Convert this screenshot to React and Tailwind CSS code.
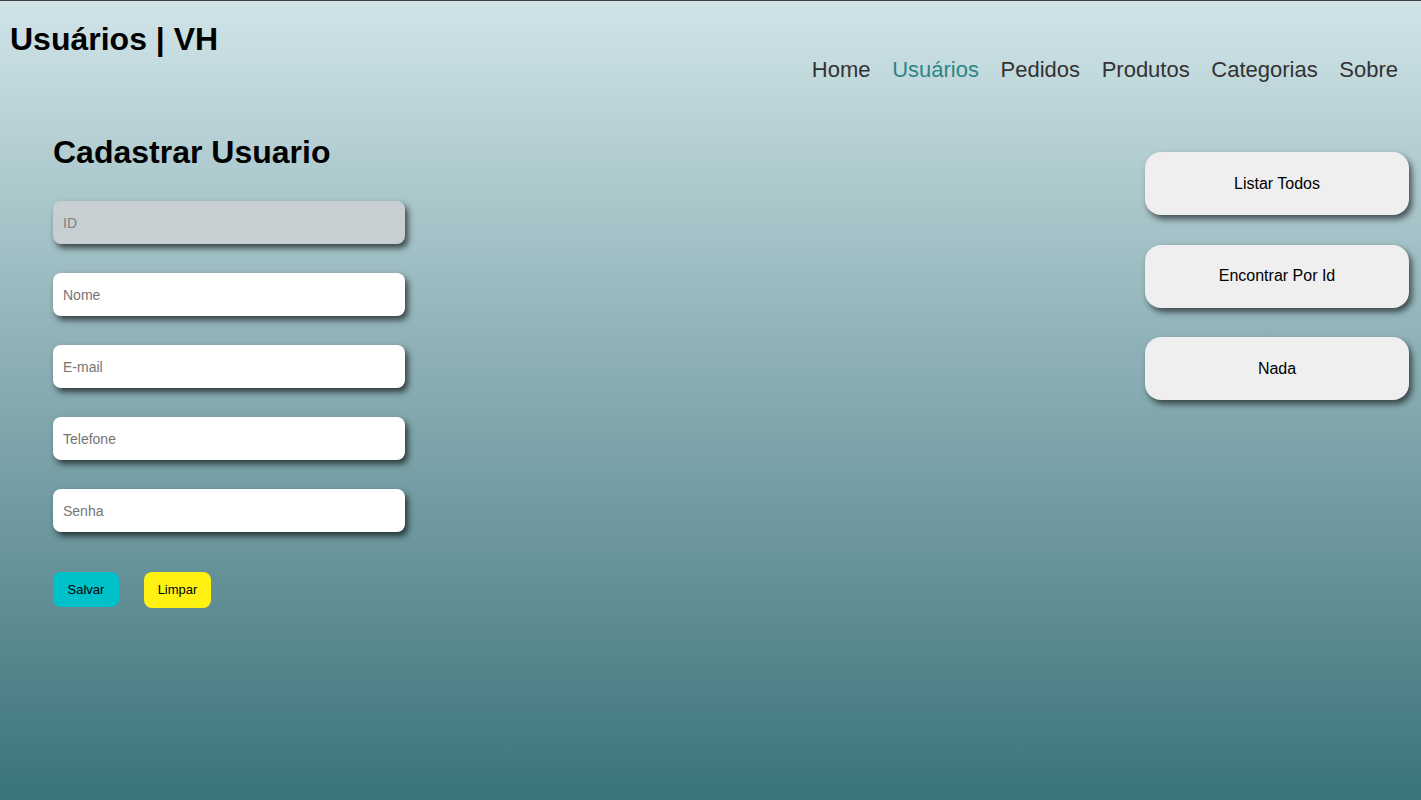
import React from "react";

export default function App() {
  const fields = ["Nome", "E-mail", "Telefone", "Senha"];
  const nav = ["Home", "Usuários", "Pedidos", "Produtos", "Categorias", "Sobre"];
  return (
    <div
      className="h-[800px] w-full overflow-hidden border-t border-[#3b3f48] bg-gradient-to-b from-[#d0e4e8] to-[#3a737a] text-black"
      style={{ fontFamily: '"Liberation Sans", Arial, sans-serif' }}
    >
      <header className="flex items-start justify-between">
        <h1 className="ml-[10px] mt-[20px] text-[32px] font-bold leading-[37px]">Usuários | VH</h1>
        <nav className="mr-[23px] mt-[56px] flex gap-[21.6px] text-[22px] leading-[25px] text-[#333333]">
          {nav.map((n) => (
            <a key={n} className={n === "Usuários" ? "text-[#2f8585]" : ""}>
              {n}
            </a>
          ))}
        </nav>
      </header>
      <main className="flex items-start justify-between">
        <section className="ml-[53px] mt-[52px]">
          <h2 className="text-[32px] font-bold leading-[37px]">Cadastrar Usuario</h2>
          <div className="mt-[30px] flex flex-col gap-[29px]">
            <input
              disabled
              placeholder="ID"
              className="h-[43px] w-[352px] rounded-[8px] bg-[#c8cfd2] px-[10px] text-[14px] text-black shadow-[3px_4px_6px_rgba(0,0,0,0.65)] outline-none placeholder:text-[#808080]"
            />
            {fields.map((f) => (
              <input
                key={f}
                placeholder={f}
                className="h-[43px] w-[352px] rounded-[8px] bg-white px-[10px] text-[14px] text-black shadow-[3px_4px_6px_rgba(0,0,0,0.65)] outline-none placeholder:text-[#757575]"
              />
            ))}
          </div>
          <div className="mt-[40px] flex gap-[25px]">
            <button className="h-[35px] w-[66px] rounded-[8px] bg-[#00c1c9] text-[13px] text-black">Salvar</button>
            <button className="h-[36px] w-[67px] rounded-[8px] bg-[#fff212] text-[13px] text-black">Limpar</button>
          </div>
        </section>
        <aside className="mr-[12px] mt-[70px] flex flex-col gap-[29.5px]">
          {["Listar Todos", "Encontrar Por Id", "Nada"].map((b) => (
            <button
              key={b}
              className="h-[63px] w-[264px] rounded-[16px] bg-[#efefef] text-[16px] text-black shadow-[3px_4px_6px_rgba(0,0,0,0.6)]"
            >
              {b}
            </button>
          ))}
        </aside>
      </main>
    </div>
  );
}
